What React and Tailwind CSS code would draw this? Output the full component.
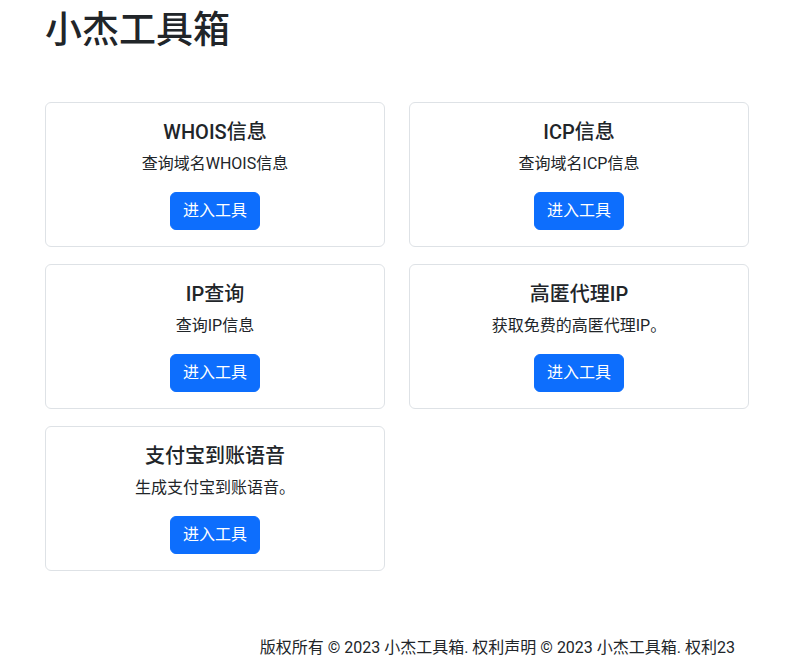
const tools = [
    { id: 1, title: "WHOIS信息", desc: "查询域名WHOIS信息" },
    { id: 2, title: "ICP信息", desc: "查询域名ICP信息" },
    { id: 3, title: "IP查询", desc: "查询IP信息" },
    { id: 4, title: "高匿代理IP", desc: "获取免费的高匿代理IP。" },
    { id: 5, title: "支付宝到账语音", desc: "生成支付宝到账语音。" },
];

function ToolCard({ tool }) {
    return (
        <div className="border border-[#dee2e6] rounded-md bg-white pt-[17px] pb-4 px-4 flex flex-col items-center text-center">
            <h5 className="text-[20px] leading-[24px] font-medium mb-2 text-[#212529]">{tool.title}</h5>
            <p className="text-[16px] leading-[24px] mb-4 text-[#212529]">{tool.desc}</p>
            <button className="bg-[#0d6efd] text-white text-[16px] leading-[24px] px-3 py-[6px] rounded-md border border-[#0d6efd]">
                进入工具
            </button>
        </div>
    );
}

export default function App() {
    return (
        <div className="min-h-[668px] bg-white text-[#212529] font-['Roboto','Noto_Sans_CJK_SC',sans-serif] flex flex-col">
            <div className="w-[704px] ml-[45px] flex flex-col">
                {/* HEADER */}
                <h1 className="text-[37px] leading-[44px] font-medium mt-[9px]">小杰工具箱</h1>

                {/* TOOL GRID */}
                <div className="grid grid-cols-2 gap-x-6 gap-y-[17px] mt-[49px]">
                    {tools.map((tool) => (
                        <ToolCard key={tool.id} tool={tool} />
                    ))}
                </div>

                {/* FOOTER */}
                <footer className="flex justify-end mt-[65px] pr-[14px]">
                    <span className="text-[16px] leading-[24px] whitespace-nowrap">版权所有 © 2023 小杰工具箱. 权利声明 © 2023 小杰工具箱. 权利23</span>
                </footer>
            </div>
        </div>
    );
}
